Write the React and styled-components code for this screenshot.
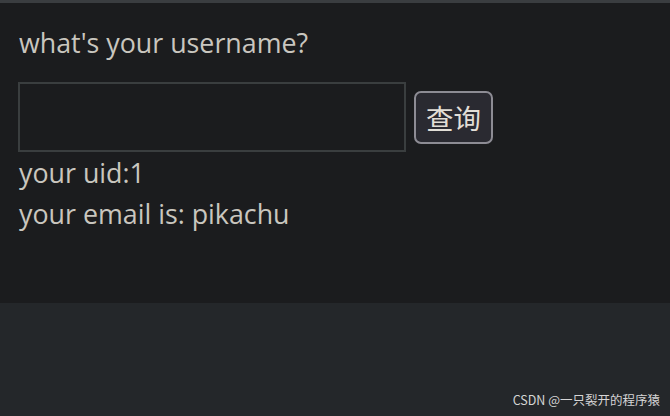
import React from 'react';
import styled, { createGlobalStyle } from 'styled-components';

const GlobalStyle = createGlobalStyle`
  html, body {
    margin: 0;
    padding: 0;
    background: #24272a;
  }
  body {
    font-family: 'Open Sans', 'Noto Sans', 'Noto Sans CJK SC', sans-serif;
  }
`;

const App = () => {
  return (
    <>
      <GlobalStyle />
      <StPage>
        <StPanel>
          <StTitle>what's your username?</StTitle>
          <StForm>
            <StInput type='text' />
            <StButton>查询</StButton>
          </StForm>
          <StLine>your uid:1</StLine>
          <StLine>your email is: pikachu</StLine>
        </StPanel>
        <StFooter>
          <StWatermark>CSDN @一只裂开的程序猿</StWatermark>
        </StFooter>
      </StPage>
    </>
  );
};

export default App;

const StPage = styled.div`
  width: 670px;
  height: 416px;
  display: flex;
  flex-direction: column;
  background: #24272a;
`;

const StPanel = styled.div`
  border-top: 3px solid #3a3d40;
  background: #1b1c1e;
  padding: 22px 18px 0 18px;
  box-sizing: border-box;
  height: 303px;
  color: #c9c6bf;
`;

const StTitle = styled.div`
  font-size: 26.8px;
  line-height: 35px;
  padding-left: 1px;
`;

const StForm = styled.div`
  display: flex;
  align-items: center;
  gap: 8px;
  margin-top: 22px;
`;

const StInput = styled.input`
  width: 388px;
  height: 70px;
  box-sizing: border-box;
  background: #1b1c1e;
  border: 2px solid #3a3e3f;
  outline: none;
  color: #c9c6bf;
  font-size: 24px;
`;

const StButton = styled.button`
  width: 79px;
  height: 53px;
  box-sizing: border-box;
  background: #2a2a31;
  border: 2px solid #8d8c94;
  border-radius: 7px;
  color: #e2ded6;
  font-family: 'Noto Sans CJK SC', sans-serif;
  font-size: 27.5px;
  font-weight: 400;
  padding: 0;
`;

const StLine = styled.div`
  font-size: 26.8px;
  line-height: 41px;
  padding-left: 1px;
`;

const StFooter = styled.div`
  flex: 1;
  display: flex;
  align-items: flex-end;
  justify-content: flex-end;
  padding: 0 10px 7px 0;
`;

const StWatermark = styled.div`
  font-family: 'Noto Sans CJK SC', sans-serif;
  font-size: 12.5px;
  color: #d5d5d5;
`;
